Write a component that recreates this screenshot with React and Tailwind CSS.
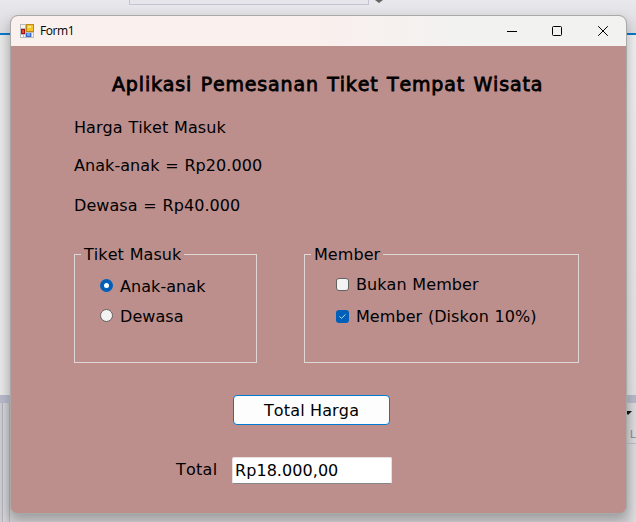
const body = "font-['DejaVu_Sans',Verdana,sans-serif] text-[16px] leading-[20px] text-black whitespace-nowrap [font-kerning:none] tracking-[0.06px] [word-spacing:0.6px]";

function FormIcon() {
  return (
    <svg width="14" height="14" viewBox="0 0 14 14" shapeRendering="crispEdges">
      <rect width="14" height="14" fill="#bcbcbc" />
      <path d="M1 1h4v3H1zM1 11h2v2H1zM4 11h1v2H4zM12 9h1v4h-1z" fill="#f7f4f2" />
      <rect x="1" y="5" width="4" height="5" fill="#a31515" />
      <rect x="2" y="6" width="2" height="3" fill="#df4b3d" />
      <rect x="6" y="0" width="8" height="8" fill="#b98a1a" />
      <rect x="7" y="1" width="6" height="6" fill="#f6c528" />
      <rect x="8" y="2" width="3" height="2" fill="#fde48a" />
      <rect x="6" y="9" width="5" height="4" fill="#3a67c9" />
      <rect x="7" y="9" width="3" height="3" fill="#70a3f5" />
    </svg>
  );
}

function TitleBar() {
  return (
    <header className="flex h-[30px] shrink-0 items-center bg-linear-to-r from-[#faf0ee] from-50% to-[#f2f3f1] to-75% pl-[9px]">
      <FormIcon />
      <span className="ml-[6px] font-['Open_Sans',sans-serif] text-[12px] leading-4 tracking-[-0.4px] text-black">Form1</span>
      <div className="ml-auto flex items-center">
        <svg className="mr-[35px]" width="10" height="10" viewBox="0 0 10 10"><path d="M0 5.5h10" stroke="#000" /></svg>
        <svg className="mr-[36px]" width="10" height="10" viewBox="0 0 10 10"><rect x=".5" y=".5" width="9" height="9" rx="1" fill="none" stroke="#000" /></svg>
        <svg className="mr-[18px]" width="10" height="10" viewBox="0 0 10 10"><path d="M.2.2l9.6 9.6M9.8.2L.2 9.8" stroke="#000" /></svg>
      </div>
    </header>
  );
}

function Group({ title, className, children }) {
  return (
    <section className={`${className} h-[109px] border border-[#dfd7d6]`}>
      <h2 className="-mt-[10px] ml-[6px] h-[19px] w-fit bg-[#bc8f8d] px-[3px]">{title}</h2>
      {children}
    </section>
  );
}

function Radio({ checked, label }) {
  return (
    <label className="flex h-[20px] items-start">
      <span className={`mt-[3px] mr-[7px] flex size-[13px] items-center justify-center rounded-full ${checked ? "bg-[#005fb8]" : "border border-[#626262] bg-[#f3f3f3]"}`}>
        {checked && <span className="size-[5px] rounded-full bg-white" />}
      </span>
      <span className="mt-px">{label}</span>
    </label>
  );
}

function Check({ checked, label }) {
  return (
    <label className="flex h-[20px] items-start">
      <span className={`mt-[3px] mr-[7px] flex size-[13px] items-center justify-center rounded-[3px] ${checked ? "bg-[#005fb8]" : "border border-[#626262] bg-[#f3f3f3]"}`}>
        {checked && (
          <svg width="7" height="5" viewBox="0 0 7 5"><path d="M.5 2.5l2 1.8L6.5.4" fill="none" stroke="#d5e8fa" strokeWidth=".9" /></svg>
        )}
      </span>
      {label}
    </label>
  );
}

function Backdrop() {
  return (
    <div className="flex h-full flex-col">
      <div className="flex h-[33px] shrink-0 bg-linear-to-b from-[#e9e9ed] to-[#dcdce0]">
        <div className="ml-[129px] h-[5px] w-[240px] border border-t-0 border-[#c2c3d3] bg-[#e6e6ea]" />
        <svg className="ml-[6px]" width="8" height="3"><path d="M0 0h8L4 3z" fill="#666" /></svg>
      </div>
      <div className="h-[2px] shrink-0 bg-[#0878c9]" />
      <div className="flex h-[360px] shrink-0 justify-between">
        <div className="w-[11px] bg-linear-to-r from-[#e8e8e8] to-[#dcdcdc]" />
        <div className="w-[10px] bg-linear-to-b from-[#eeeeee] to-[#e0e0e0]" />
      </div>
      <div className="h-[8px] shrink-0 bg-[#b7b8c8]" />
      <div className="flex grow justify-between bg-[#cdcdcf]">
        <div className="ml-[2px] w-[8px] border-x border-[#aeb0bf] bg-linear-to-r from-[#d5d5d7] to-[#c6c6c8]" />
        <div className="w-[10px] bg-linear-to-r from-[#cdcdcf] to-[#dcdcde]">
          <svg className="mt-[8px] -ml-px" width="7" height="4"><path d="M0 0h7L3 4z" fill="#111" /></svg>
          <div className="mt-[11px] h-[18px] border-b border-[#bcbcc0] pl-[4px] font-['Liberation_Sans',sans-serif] text-[11px] leading-[17px] text-[#85858d]">L</div>
        </div>
      </div>
    </div>
  );
}

export default function App() {
  return (
    <div className="relative h-[522px] w-[636px] overflow-hidden bg-[#d7d7da]">
      <Backdrop />
      <main className="absolute top-[15px] left-[10px] flex h-[499px] w-[617px] flex-col overflow-hidden rounded-[8px] border border-[#a9a9a9] bg-[#bc8f8d] shadow-[0_5px_12px_rgba(0,0,0,0.25)]">
        <TitleBar />
        <div className={`flex grow flex-col ${body}`}>
          <h1 className="mt-[26px] ml-[101px] text-[19px] leading-[24px] tracking-[0.85px] [word-spacing:1.5px] [-webkit-text-stroke:0.8px_black]">Aplikasi Pemesanan Tiket Tempat Wisata</h1>
          <div className="ml-[63px]">
            <p className="mt-[22px]">Harga Tiket Masuk</p>
            <p className="mt-[18px]">Anak-anak = Rp20.000</p>
            <p className="mt-[20px]">Dewasa = Rp40.000</p>
          </div>
          <div className="mt-[38px] ml-[63px] flex gap-[47px]">
            <Group title="Tiket Masuk" className="w-[183px]">
              <div className="mt-[12px] ml-[25px] flex flex-col gap-[10px]">
                <Radio checked label="Anak-anak" />
                <Radio label="Dewasa" />
              </div>
            </Group>
            <Group title="Member" className="w-[275px]">
              <div className="mt-[11px] ml-[31px] flex flex-col gap-[12px]">
                <Check label="Bukan Member" />
                <Check checked label="Member (Diskon 10%)" />
              </div>
            </Group>
          </div>
          <button className="mt-[32px] ml-[222px] h-[30px] w-[157px] rounded-[4px] border border-[#0078d4] bg-[#fdfdfd] pt-[2px] tracking-[0.15px]">Total Harga</button>
          <div className="mt-[32px] ml-[165px] flex">
            <span className="w-[56px] pt-[3px] tracking-[0.25px]">Total</span>
            <div className="h-[27px] w-[160px] rounded-[2px] border border-[#e8dfde] border-b-[#858585] bg-white pt-[3px] pl-[2px]">Rp18.000,00</div>
          </div>
        </div>
      </main>
    </div>
  );
}
